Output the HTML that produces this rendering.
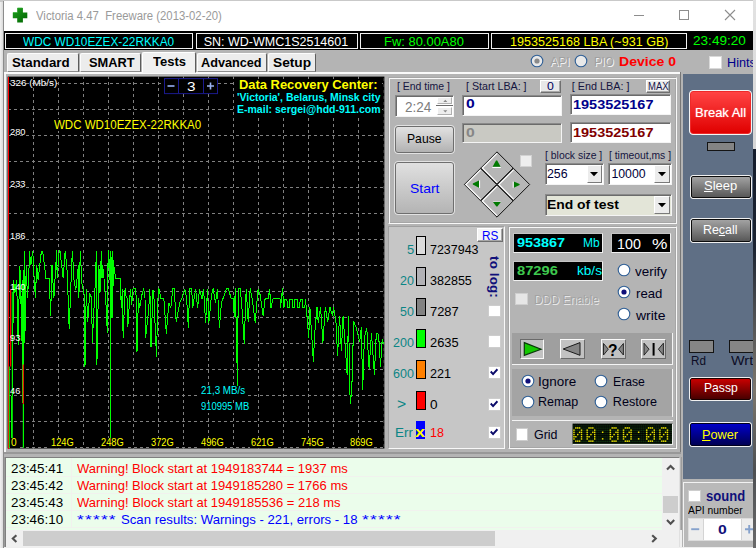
<!DOCTYPE html>
<html><head><meta charset="utf-8"><title>Victoria 4.47</title>
<style>
html,body{margin:0;padding:0}
body{width:756px;height:548px;overflow:hidden;position:relative;background:#e9e9e9;font-family:'Liberation Sans', sans-serif}
#r{position:absolute;left:0;top:0;width:756px;height:548px;overflow:hidden}
#r div,#r span,#r svg{position:absolute}
#r div{overflow:visible}
</style></head><body><div id="r">
<div style="left:0px;top:0px;width:756px;height:548px;background:linear-gradient(90deg,#f1f1f1 0,#dadada 3px,#dadada 100%)"></div>
<div style="left:0px;top:0px;width:756px;height:1.5px;background:#c9c9c9"></div>
<div style="left:753px;top:0px;width:3px;height:148.5px;background:linear-gradient(#e2e2e2,#d6d6d6)"></div>
<div style="left:753px;top:148.5px;width:3px;height:400px;background:linear-gradient(#141c2c,#1c2432 25%,#4a4c50 40%,#7d776e 60%,#4d4f52 80%,#6a6a6a 100%)"></div>
<div style="left:3px;top:1px;width:750px;height:547px;background:#b4b4b4;border-left:1px solid #8c8c8c"></div>
<div style="left:4px;top:1px;width:749px;height:30px;background:#fff"></div>
<svg style="left:12px;top:7px" width="17" height="17" viewBox="0 0 17 17"><defs><linearGradient id="gp" x1="0" y1="0" x2="1" y2="1"><stop offset="0" stop-color="#1fa01f"/><stop offset="1" stop-color="#006400"/></linearGradient></defs><path d="M5.2 1h5.7v4.4h4.4v5.8h-4.4v4.4h-5.7v-4.4h-4.4v-5.8h4.4z" fill="url(#gp)"/><path d="M5.5 1h5M1 5.5h4.5" stroke="#35b535" stroke-width="1" fill="none" opacity=".7"/></svg>
<span style="left:35.73px;top:10.34px;font:normal 12px 'Liberation Sans', sans-serif;line-height:1;color:#9a9a9a;white-space:pre;transform:scaleX(0.9455);transform-origin:0 0;white-space:pre;">Victoria 4.47  Freeware (2013-02-20)</span>
<svg style="left:620px;top:1px" width="133" height="30" viewBox="620 1 133 30"><path d="M634 15.5h10" stroke="#8d8d8d" stroke-width="1"/><rect x="679.5" y="10.5" width="9" height="9" fill="none" stroke="#8d8d8d" stroke-width="1"/><path d="M725 10l10 10M735 10l-10 10" stroke="#8d8d8d" stroke-width="1.1"/></svg>
<div style="left:4px;top:31px;width:749px;height:18.9px;background:#000"></div>
<div style="left:5px;top:32.6px;width:188.2px;height:16.2px;box-sizing:border-box;border:1px solid #f2f2f2"></div>
<div style="left:195.5px;top:32.6px;width:162.5px;height:16.2px;box-sizing:border-box;border:1px solid #f2f2f2"></div>
<div style="left:360px;top:32.6px;width:129px;height:16.2px;box-sizing:border-box;border:1px solid #f2f2f2"></div>
<div style="left:491.3px;top:32.6px;width:195.9px;height:16.2px;box-sizing:border-box;border:1px solid #f2f2f2"></div>
<span style="left:22.91px;top:35.72px;font:normal 12.5px 'Liberation Sans', sans-serif;line-height:1;color:#00ffff;white-space:pre;transform:scaleX(0.9463);transform-origin:0 0;">WDC WD10EZEX-22RKKA0</span>
<span style="left:203.68px;top:35.72px;font:normal 12.5px 'Liberation Sans', sans-serif;line-height:1;color:#fff;white-space:pre;">SN: WD-WMC1S2514601</span>
<span style="left:384.05px;top:35.72px;font:normal 12.5px 'Liberation Sans', sans-serif;line-height:1;color:#00ff00;white-space:pre;transform:scaleX(1.0357);transform-origin:0 0;">Fw: 80.00A80</span>
<span style="left:510.07px;top:35.72px;font:normal 12.5px 'Liberation Sans', sans-serif;line-height:1;color:#ffff00;white-space:pre;transform:scaleX(1.0072);transform-origin:0 0;">1953525168 LBA (~931 GB)</span>
<span style="left:693.32px;top:34.46px;font:normal 13.4px 'Liberation Sans', sans-serif;line-height:1;color:#00ff00;white-space:pre;transform:scaleX(1.0141);transform-origin:0 0;">23:49:20</span>
<div style="left:6.8px;top:53.2px;width:71.9px;height:18.9px;box-sizing:border-box;background:#ececec;border:1px solid;border-color:#fcfcfc #5c5c5c #8c8c8c #fcfcfc;border-radius:2px 2px 0 0"></div>
<span style="left:11.93px;top:57.35px;font:bold 12.7px 'Liberation Sans', sans-serif;line-height:1;color:#000;white-space:pre;transform:scaleX(1.0478);transform-origin:0 0;">Standard</span>
<div style="left:79.6px;top:53.2px;width:61.2px;height:18.9px;box-sizing:border-box;background:#ececec;border:1px solid;border-color:#fcfcfc #5c5c5c #8c8c8c #fcfcfc;border-radius:2px 2px 0 0"></div>
<span style="left:89.16px;top:57.35px;font:bold 12.7px 'Liberation Sans', sans-serif;line-height:1;color:#000;white-space:pre;transform:scaleX(1.0105);transform-origin:0 0;">SMART</span>
<div style="left:197px;top:53.2px;width:69.8px;height:18.9px;box-sizing:border-box;background:#ececec;border:1px solid;border-color:#fcfcfc #5c5c5c #8c8c8c #fcfcfc;border-radius:2px 2px 0 0"></div>
<span style="left:200.97px;top:57.35px;font:bold 12.7px 'Liberation Sans', sans-serif;line-height:1;color:#000;white-space:pre;">Advanced</span>
<div style="left:268px;top:53.2px;width:47.8px;height:18.9px;box-sizing:border-box;background:#ececec;border:1px solid;border-color:#fcfcfc #5c5c5c #8c8c8c #fcfcfc;border-radius:2px 2px 0 0"></div>
<span style="left:272.71px;top:57.35px;font:bold 12.7px 'Liberation Sans', sans-serif;line-height:1;color:#000;white-space:pre;transform:scaleX(1.0800);transform-origin:0 0;">Setup</span>
<div style="left:4px;top:72.1px;width:676.4px;height:2px;background:#fafafa"></div>
<div style="left:680.2px;top:72px;width:1px;height:380.5px;background:#777"></div>
<div style="left:142px;top:51.7px;width:54.3px;height:21.5px;box-sizing:border-box;background:#f0f0f0;border:1px solid;border-color:#fff #5c5c5c #f0f0f0 #fff;border-radius:2px 2px 0 0"></div>
<span style="left:153.25px;top:56.15px;font:bold 12.7px 'Liberation Sans', sans-serif;line-height:1;color:#000;white-space:pre;transform:scaleX(1.0248);transform-origin:0 0;">Tests</span>
<div style="left:4px;top:74px;width:1.6px;height:378px;background:#f4f4f4"></div>
<svg style="left:529.3px;top:52.8px" width="16" height="16" viewBox="0 0 16 16"><circle cx="8" cy="8" r="5.8" fill="#e9e9e9" stroke="#2f5f96" stroke-width="1.1"/><circle cx="8" cy="8" r="2.6" fill="#8a8a8a"/></svg>
<svg style="left:573px;top:52.8px" width="16" height="16" viewBox="0 0 16 16"><circle cx="8" cy="8" r="5.8" fill="#e9e9e9" stroke="#2f5f96" stroke-width="1.1"/></svg>
<span style="left:549.69px;top:55.20px;font:normal 13px 'Liberation Sans', sans-serif;line-height:1;color:#a0a0a0;white-space:pre;transform:scaleX(0.9406);transform-origin:0 0;text-shadow:1px 1px 0 #f4f4f4;">API</span>
<span style="left:593.73px;top:55.20px;font:normal 13px 'Liberation Sans', sans-serif;line-height:1;color:#a0a0a0;white-space:pre;transform:scaleX(0.8765);transform-origin:0 0;text-shadow:1px 1px 0 #f4f4f4;">PIO</span>
<span style="left:619.10px;top:54.74px;font:bold 13.3px 'Liberation Sans', sans-serif;line-height:1;color:#ff0000;white-space:pre;transform:scaleX(1.0563);transform-origin:0 0;">Device 0</span>
<div style="left:709px;top:56.3px;width:12.5px;height:12.5px;box-sizing:border-box;background:#fff;border:1px solid #d9d9d9"></div>
<span style="left:727.17px;top:56.20px;font:normal 13px 'Liberation Sans', sans-serif;line-height:1;color:#00008b;white-space:pre;transform:scaleX(0.9744);transform-origin:0 0;">Hints</span>
<svg style="left:0;top:0" width="756" height="548" viewBox="0 0 756 548"><rect x="7.6" y="76.6" width="376.8" height="371.9" fill="#000"/><path d="M33.5 76.0V448.5M58.5 76.0V448.5M83.5 76.0V448.5M108.5 76.0V448.5M133.5 76.0V448.5M158.5 76.0V448.5M183.5 76.0V448.5M208.5 76.0V448.5M233.5 76.0V448.5M258.5 76.0V448.5M283.5 76.0V448.5M308.5 76.0V448.5M333.5 76.0V448.5M358.5 76.0V448.5M8.0 83.5H384.4M8.0 109.5H384.4M8.0 135.5H384.4M8.0 161.5H384.4M8.0 187.5H384.4M8.0 213.5H384.4M8.0 239.5H384.4M8.0 265.5H384.4M8.0 291.5H384.4M8.0 317.5H384.4M8.0 343.5H384.4M8.0 369.5H384.4M8.0 395.5H384.4M8.0 421.5H384.4M8.0 447.5H384.4" stroke="#808080" stroke-width="1" stroke-dasharray="3 3" fill="none" shape-rendering="crispEdges"/><path d="M384.2 78V448" stroke="#777" stroke-width="1" stroke-dasharray="3 3" fill="none"/><path d="M8.5 76.6V448.5" stroke="#ff0000" stroke-width="1" shape-rendering="crispEdges"/><path d="M10.6 289.5V366.5" stroke="#ff0000" stroke-width="1.2"/><polyline points="11.3,447 13.6,279.7 14.9,292.9 16.6,279.7 18.2,344.7 19.6,266.5 20.6,274.4 21.5,341 22.2,279.7 23.3,447 23.8,279.7 24.4,251.2 24.8,343 26.2,266.5 27.5,298.2 28.8,274.4 29.5,251.2 30.8,265.1 32.8,250.6 33.4,266.5 35.4,298.2 36.7,265.1 38.1,279.7 41.4,251.2 42.7,251.2 46,278.4 49.3,278.4 50.6,316 52,265.1 53.9,298.2 55.9,264.5 56.6,249.9 57.2,278.4 59.2,250.6 59.9,250.6 63.2,278.4 65.2,250.6 67.2,271.7 69.2,328.8 71.8,261.2 72.5,250.6 73.8,278.4 75.8,290.3 78.4,265.1 78.8,298.2 80.4,250.6 81.7,282.3 84.4,295.6 85,366.5 86.3,288.9 87.7,322 89.7,292.9 91.6,298.2 92.3,342.7 95.6,275.7 96.3,251.2 96.9,364.5 98.9,265.1 99.6,286.3 100,292.9 101.3,251.2 102,278.4 102.6,265.1 104,278.4 106,304.8 107.3,332.8 107.9,265.1 108.6,249.9 109.3,279.7 110.3,251.2 110.6,447 111.2,265.1 112.6,251.2 112.8,318 113.2,259.8 114.6,271.7 115.9,278.4 120.5,278.4 121.2,307.5 122.5,288.9 123.1,337.7 125.1,288.3 125.8,295.6 127.1,298.2 127.8,326.8 130.4,288.9 131.7,304.8 133.1,288.3 135.1,288.3 136.4,298.2 137,351.6 138.4,298.2 139.7,307.5 142.3,292.9 143.7,288.3 145,298.2 145.6,337.7 148.9,307.5 149.6,288.9 150,294.8 151,347.4 153,289.9 154,298.8 156.5,357.3 157.9,298.8 158.9,288.5 160.9,298.8 163.9,298.8 166.3,333.5 168.8,302.8 170.8,307.7 172.8,288.9 174.2,288.9 176.2,321.6 179.8,302.8 181.7,298.8 184.7,288.9 186.7,298.8 188.3,327.6 189.7,288.9 191.7,288.9 192.7,307.7 195.6,288.9 197.6,307.7 199.6,288.9 202,298.8 203.6,288.9 205.6,322.6 207.5,288.9 208.9,322.6 211.5,294.8 213.1,288.5 215.5,302.8 217.5,288.9 219.4,327.6 221.4,302.8 224.4,294.8 226.4,288.5 228.4,288.9 231.3,298.8 233.3,298.8 234.3,316.7 235.3,288.5 236.9,354.4 237.3,386.1 238.3,288.9 240.3,288.9 242.3,312.7 244.2,343.5 246.2,288.9 248.2,321.6 250.2,288.5 252.2,298.8 255.2,322.6 258.1,288.9 260.1,294.8 263.1,315.7 265.1,298.8 268.1,298.8 269.6,288.9 271,307.7 273,298.8 280,298.8 280.6,307.7 282.5,288.5 283.9,307.7 285,299 286.9,299 287.4,307.3 289.3,307.3 289.7,299 292.1,299 292.6,307.3 294.5,307.3 295,299 297.3,299 297.8,307.3 299.7,307.3 300.2,299 302.5,299 303,307.3 304.9,307.3 305.4,299 306.3,307.3 308.7,338.1 309.9,307.3 313.4,361.8 314.6,334.5 317,307.3 318.2,322.7 320.6,307.3 322.9,342.8 325.3,307.3 327.7,321.5 330,307.3 332.4,315.6 333.6,307.3 336,322.7 337.6,355.8 339.5,315.6 341.4,351.1 343.1,315.6 345.4,348.7 347.1,374.8 348.5,315.6 350.2,404.4 351.8,389 353.7,321.5 356.1,327.4 359.7,341.6 361.3,327.4 362.7,390.2 364.4,336.9 366.8,328.6 369.1,368.9 371.5,333.3 374.4,374.8 376.3,333.3 378.6,334.5 380.5,366.5 382.2,339.3 383.4,344" fill="none" stroke="#00ff00" stroke-width="1" stroke-linejoin="miter" stroke-miterlimit="2" shape-rendering="crispEdges"/><path d="M9.3 366.5V448M12.3 291.8V448M23.3 404V448" stroke="#00ff00" stroke-width="1"/><path d="M23.3 364.5V404" stroke="#ff0000" stroke-width="1.2"/><rect x="164.5" y="78.6" width="53" height="15" fill="#000" stroke="#1a1a8c" stroke-width="1"/><path d="M178.5 78.6V93.6M203.5 78.6V93.6" stroke="#1a1a8c" stroke-width="1"/><path d="M167.5 86h7" stroke="#8ea6e6" stroke-width="1.7"/><path d="M207 86h7M210.5 82.5v7" stroke="#9ab2f0" stroke-width="1.6"/></svg>
<span style="left:186.73px;top:80.62px;font:normal 12.5px 'Liberation Sans', sans-serif;line-height:1;color:#fff;white-space:pre;transform:scaleX(1.2274);transform-origin:0 0;">3</span>
<span style="left:9.81px;top:77.57px;font:normal 9.6px 'Liberation Sans', sans-serif;line-height:1;color:#fff;white-space:pre;transform:scaleX(1.0312);transform-origin:0 0;">326 (Mb/s)</span>
<span style="left:9.83px;top:126.87px;font:normal 9.6px 'Liberation Sans', sans-serif;line-height:1;color:#fff;white-space:pre;transform:scaleX(0.9697);transform-origin:0 0;">280</span>
<span style="left:9.83px;top:178.77px;font:normal 9.6px 'Liberation Sans', sans-serif;line-height:1;color:#fff;white-space:pre;transform:scaleX(0.9697);transform-origin:0 0;">233</span>
<span style="left:9.83px;top:230.77px;font:normal 9.6px 'Liberation Sans', sans-serif;line-height:1;color:#fff;white-space:pre;transform:scaleX(0.9697);transform-origin:0 0;">186</span>
<span style="left:9.83px;top:282.07px;font:normal 9.6px 'Liberation Sans', sans-serif;line-height:1;color:#fff;white-space:pre;transform:scaleX(0.9697);transform-origin:0 0;">140</span>
<span style="left:9.84px;top:333.27px;font:normal 9.6px 'Liberation Sans', sans-serif;line-height:1;color:#fff;white-space:pre;transform:scaleX(0.9679);transform-origin:0 0;">93</span>
<span style="left:9.84px;top:386.07px;font:normal 9.6px 'Liberation Sans', sans-serif;line-height:1;color:#fff;white-space:pre;transform:scaleX(0.9679);transform-origin:0 0;">46</span>
<div style="left:10.3px;top:437.51px;width:7.6px;height:10.5px;background:#000"></div>
<span style="left:11.00px;top:436.81px;font:normal 10.5px 'Liberation Sans', sans-serif;line-height:1;color:#ffff00;white-space:pre;transform:scaleX(0.9596);transform-origin:0 0;">0</span>
<div style="left:50.2px;top:437.51px;width:24.8px;height:10.5px;background:#000"></div>
<span style="left:50.94px;top:436.81px;font:normal 10.5px 'Liberation Sans', sans-serif;line-height:1;color:#ffff00;white-space:pre;transform:scaleX(0.8848);transform-origin:0 0;">124G</span>
<div style="left:100.1px;top:437.51px;width:24.8px;height:10.5px;background:#000"></div>
<span style="left:100.84px;top:436.81px;font:normal 10.5px 'Liberation Sans', sans-serif;line-height:1;color:#ffff00;white-space:pre;transform:scaleX(0.8848);transform-origin:0 0;">248G</span>
<div style="left:150.1px;top:437.51px;width:24.8px;height:10.5px;background:#000"></div>
<span style="left:150.84px;top:436.81px;font:normal 10.5px 'Liberation Sans', sans-serif;line-height:1;color:#ffff00;white-space:pre;transform:scaleX(0.8848);transform-origin:0 0;">372G</span>
<div style="left:200.3px;top:437.51px;width:24.8px;height:10.5px;background:#000"></div>
<span style="left:201.04px;top:436.81px;font:normal 10.5px 'Liberation Sans', sans-serif;line-height:1;color:#ffff00;white-space:pre;transform:scaleX(0.8848);transform-origin:0 0;">496G</span>
<div style="left:250.3px;top:437.51px;width:24.8px;height:10.5px;background:#000"></div>
<span style="left:251.04px;top:436.81px;font:normal 10.5px 'Liberation Sans', sans-serif;line-height:1;color:#ffff00;white-space:pre;transform:scaleX(0.8848);transform-origin:0 0;">621G</span>
<div style="left:300.4px;top:437.51px;width:24.8px;height:10.5px;background:#000"></div>
<span style="left:301.14px;top:436.81px;font:normal 10.5px 'Liberation Sans', sans-serif;line-height:1;color:#ffff00;white-space:pre;transform:scaleX(0.8848);transform-origin:0 0;">745G</span>
<div style="left:349.4px;top:437.51px;width:24.8px;height:10.5px;background:#000"></div>
<span style="left:350.14px;top:436.81px;font:normal 10.5px 'Liberation Sans', sans-serif;line-height:1;color:#ffff00;white-space:pre;transform:scaleX(0.8848);transform-origin:0 0;">869G</span>
<div style="left:53.6px;top:119.44px;width:149px;height:12px;background:#000"></div>
<span style="left:54.22px;top:118.64px;font:normal 12px 'Liberation Sans', sans-serif;line-height:1;color:#ffff00;white-space:pre;transform:scaleX(0.9594);transform-origin:0 0;">WDC WD10EZEX-22RKKA0</span>
<div style="left:236px;top:78.5px;width:146px;height:37.5px;background:#000"></div>
<span style="left:238.75px;top:79.13px;font:bold 12.6px 'Liberation Sans', sans-serif;line-height:1;color:#ffff00;white-space:pre;transform:scaleX(1.0252);transform-origin:0 0;">Data Recovery Center:</span>
<span style="left:237.48px;top:92.73px;font:bold 10px 'Liberation Sans', sans-serif;line-height:1;color:#00ffff;white-space:pre;transform:scaleX(1.0447);transform-origin:0 0;">'Victoria', Belarus, Minsk city</span>
<span style="left:237.47px;top:105.03px;font:bold 10px 'Liberation Sans', sans-serif;line-height:1;color:#00ffff;white-space:pre;transform:scaleX(1.0519);transform-origin:0 0;">E-mail: sergei@hdd-911.com</span>
<div style="left:200.3px;top:386.8px;width:46.2px;height:10px;background:#000"></div>
<span style="left:201.01px;top:386.14px;font:normal 10px 'Liberation Sans', sans-serif;line-height:1;color:#00ffff;white-space:pre;transform:scaleX(0.9811);transform-origin:0 0;">21,3 MB/s</span>
<div style="left:200.3px;top:402.6px;width:50.3px;height:10px;background:#000"></div>
<span style="left:201.03px;top:401.94px;font:normal 10px 'Liberation Sans', sans-serif;line-height:1;color:#00ffff;white-space:pre;transform:scaleX(0.9431);transform-origin:0 0;">910995 MB</span>
<div style="left:4px;top:451.8px;width:677px;height:1.8px;background:#989898"></div>
<div style="left:388px;top:77px;width:289px;height:147px;box-sizing:border-box;background:#b4b4b4;border:1px solid;border-color:#a6a6a6 #f8f8f8 #f8f8f8 #a6a6a6;box-shadow:inset 1px 1px 0 #f8f8f8,inset -1px -1px 0 #a6a6a6"></div>
<div style="left:388.2px;top:226.2px;width:116.8px;height:223px;box-sizing:border-box;background:#c6c6c6;border:1px solid;border-color:#a0a0a0 #f8f8f8 #f8f8f8 #a0a0a0"></div>
<div style="left:508px;top:226px;width:169px;height:223px;box-sizing:border-box;background:#b4b4b4;border:1px solid;border-color:#a6a6a6 #f8f8f8 #f8f8f8 #a6a6a6;box-shadow:inset 1px 1px 0 #f8f8f8,inset -1px -1px 0 #a6a6a6"></div>
<span style="left:396.88px;top:80.86px;font:normal 10.8px 'Liberation Sans', sans-serif;line-height:1;color:#15153f;white-space:pre;transform:scaleX(0.9677);transform-origin:0 0;">[ End time ]</span>
<span style="left:465.57px;top:80.86px;font:normal 10.8px 'Liberation Sans', sans-serif;line-height:1;color:#15153f;white-space:pre;transform:scaleX(0.9894);transform-origin:0 0;">[ Start LBA: ]</span>
<span style="left:571.86px;top:80.86px;font:normal 10.8px 'Liberation Sans', sans-serif;line-height:1;color:#15153f;white-space:pre;">[ End LBA: ]</span>
<span style="left:544.78px;top:150.16px;font:normal 10.8px 'Liberation Sans', sans-serif;line-height:1;color:#15153f;white-space:pre;transform:scaleX(0.9635);transform-origin:0 0;">[ block size ]</span>
<span style="left:609.48px;top:150.16px;font:normal 10.8px 'Liberation Sans', sans-serif;line-height:1;color:#15153f;white-space:pre;transform:scaleX(0.9571);transform-origin:0 0;">[ timeout,ms ]</span>
<div style="left:395px;top:95px;width:59.4px;height:22.4px;box-sizing:border-box;background:#fff;border:1px solid;border-color:#8a8a8a #f4f4f4 #f4f4f4 #8a8a8a;box-shadow:inset 1px 1px 0 #6b6b6b;"></div>
<span style="left:404.92px;top:100.35px;font:normal 14px 'Liberation Sans', sans-serif;line-height:1;color:#7d7d7d;white-space:pre;transform:scaleX(0.9671);transform-origin:0 0;">2:24</span>
<div style="left:436.8px;top:97px;width:15.6px;height:7.4px;box-sizing:border-box;background:#eeeeee;border:1px solid;border-color:#fff #b0b0b0 #b0b0b0 #fff"></div>
<div style="left:436.4px;top:104.5px;width:17px;height:1.3px;background:#6a6a6a"></div>
<div style="left:436.8px;top:107px;width:15.6px;height:8.4px;box-sizing:border-box;background:#eeeeee;border:1px solid;border-color:#fff #b0b0b0 #b0b0b0 #fff"></div>
<svg style="left:436.5px;top:96px" width="16" height="21" viewBox="0 0 16 21"><path d="M6.3 5.9l2-2.2 2 2.2z M6.3 14.2l2 2.2 2-2.2z" fill="#8a8a8a"/></svg>
<div style="left:540px;top:80px;width:20.8px;height:12.8px;box-sizing:border-box;background:#e8e8e8;border:1px solid;border-color:#fff #6f6f6f #6f6f6f #fff;box-shadow:inset -1px -1px 0 #a8a8a8"></div>
<span style="left:546.69px;top:81.29px;font:normal 11px 'Liberation Sans', sans-serif;line-height:1;color:#000060;white-space:pre;transform:scaleX(1.1144);transform-origin:0 0;">0</span>
<div style="left:646px;top:80.2px;width:24.3px;height:12.4px;box-sizing:border-box;background:#ececec;border:1px solid;border-color:#fff #6f6f6f #6f6f6f #fff;box-shadow:inset -1px -1px 0 #a8a8a8"></div>
<span style="left:648.33px;top:81.43px;font:normal 10.6px 'Liberation Sans', sans-serif;line-height:1;color:#15154a;white-space:pre;transform:scaleX(0.8946);transform-origin:0 0;">MAX</span>
<div style="left:462px;top:94.8px;width:99.5px;height:20.8px;box-sizing:border-box;background:#fff;border:1px solid;border-color:#8a8a8a #f4f4f4 #f4f4f4 #8a8a8a;box-shadow:inset 1px 1px 0 #6b6b6b;"></div>
<span style="left:465.51px;top:98.33px;font:bold 12.6px 'Liberation Sans', sans-serif;line-height:1;color:#00008b;white-space:pre;transform:scaleX(1.2510);transform-origin:0 0;">0</span>
<div style="left:570.2px;top:94.4px;width:101.2px;height:20.8px;box-sizing:border-box;background:#fff;border:1px solid;border-color:#8a8a8a #f4f4f4 #f4f4f4 #8a8a8a;box-shadow:inset 1px 1px 0 #6b6b6b;"></div>
<span style="left:573.28px;top:98.50px;font:bold 12.4px 'Liberation Sans', sans-serif;line-height:1;color:#00008b;white-space:pre;transform:scaleX(1.1672);transform-origin:0 0;">1953525167</span>
<div style="left:462px;top:122.5px;width:99.5px;height:20.9px;box-sizing:border-box;background:#c9c9c3;border:1px solid;border-color:#8a8a8a #f4f4f4 #f4f4f4 #8a8a8a;box-shadow:inset 1px 1px 0 #6b6b6b;"></div>
<span style="left:465.51px;top:126.53px;font:bold 12.6px 'Liberation Sans', sans-serif;line-height:1;color:#868686;white-space:pre;transform:scaleX(1.2510);transform-origin:0 0;">0</span>
<div style="left:570.2px;top:122.4px;width:101.2px;height:20.4px;box-sizing:border-box;background:#fff;border:1px solid;border-color:#8a8a8a #f4f4f4 #f4f4f4 #8a8a8a;box-shadow:inset 1px 1px 0 #6b6b6b;"></div>
<span style="left:573.28px;top:126.70px;font:bold 12.4px 'Liberation Sans', sans-serif;line-height:1;color:#800000;white-space:pre;transform:scaleX(1.1672);transform-origin:0 0;">1953525167</span>
<div style="left:394px;top:125px;width:61.3px;height:29.2px;box-sizing:border-box;border:1px solid #e2e2e2;border-radius:4px;background:#e2e2e2"></div>
<div style="left:395px;top:126px;width:59.3px;height:27.2px;box-sizing:border-box;border:1px solid #6e6e6e;border-radius:3px;background:linear-gradient(#e2e2e2,#b2b2b2)"></div>
<span style="left:406.79px;top:133.46px;font:normal 12.8px 'Liberation Sans', sans-serif;line-height:1;color:#000;white-space:pre;transform:scaleX(0.9510);transform-origin:0 0;">Pause</span>
<div style="left:394px;top:161.2px;width:61.3px;height:54px;box-sizing:border-box;border:1px solid #e2e2e2;border-radius:4px;background:#e2e2e2"></div>
<div style="left:395px;top:162.2px;width:59.3px;height:52px;box-sizing:border-box;border:1px solid #6e6e6e;border-radius:3px;background:linear-gradient(#e0e0e0,#b4b4b4)"></div>
<span style="left:409.70px;top:182.96px;font:normal 12.8px 'Liberation Sans', sans-serif;line-height:1;color:#0000ff;white-space:pre;transform:scaleX(1.0873);transform-origin:0 0;">Start</span>
<svg style="left:0;top:0" width="756" height="548" viewBox="0 0 756 548"><path d="M480.85 168L497 151.85L513.15 168L497 184.15Z" fill="#b6b6b6" stroke="#101010" stroke-width="1"/><path d="M497 153.35L482.35 168L497 182.65" fill="none" stroke="#fdfdfd" stroke-width="1.25"/><path d="M464.35 184.5L480.5 168.35L496.65 184.5L480.5 200.65Z" fill="#b6b6b6" stroke="#101010" stroke-width="1"/><path d="M480.5 169.85L465.85 184.5L480.5 199.15" fill="none" stroke="#fdfdfd" stroke-width="1.25"/><path d="M497.35 184.5L513.5 168.35L529.65 184.5L513.5 200.65Z" fill="#b6b6b6" stroke="#101010" stroke-width="1"/><path d="M513.5 169.85L498.85 184.5L513.5 199.15" fill="none" stroke="#fdfdfd" stroke-width="1.25"/><path d="M480.85 201L497 184.85L513.15 201L497 217.15Z" fill="#b6b6b6" stroke="#101010" stroke-width="1"/><path d="M497 186.35L482.35 201L497 215.65" fill="none" stroke="#fdfdfd" stroke-width="1.25"/><path d="M496 160.6h1.2l3.4 6.2h-8z" fill="#007a00"/><path d="M492.3 167.5h8.6" stroke="#fff" stroke-width="1"/><path d="M472.8 183.6v1l6.2 3.2v-7.4z" fill="#007a00"/><path d="M479.6 180.4v7.6" stroke="#fff" stroke-width="1"/><path d="M519.6 184v1l-5.8 2.8v-6.4z" fill="#007a00"/><path d="M513.2 181.6v6.2" stroke="#fff" stroke-width="1"/><path d="M496.4 206.6h1l3.4-4.6h-7.8z" fill="#007a00"/><path d="M493 201.4h7.6" stroke="#fff" stroke-width=".8" opacity=".55"/></svg>
<div style="left:520.4px;top:154.8px;width:12px;height:11.8px;box-sizing:border-box;background:#eeeeee;border:1px solid #d2d2d2"></div>
<div style="left:544.5px;top:162.8px;width:59.1px;height:22px;box-sizing:border-box;background:#fff;border:1px solid;border-color:#8a8a8a #f4f4f4 #f4f4f4 #8a8a8a;box-shadow:inset 1px 1px 0 #6b6b6b;"></div>
<div style="left:586.6px;top:164.8px;width:15px;height:18px;box-sizing:border-box;background:#ececec;border:1px solid;border-color:#fff #7a7a7a #7a7a7a #fff"></div>
<svg style="left:589.1px;top:171.3px" width="10" height="6" viewBox="0 0 10 6"><path d="M1 1h8l-4 4.2z" fill="#000"/></svg>
<span style="left:546.78px;top:168.19px;font:normal 12.3px 'Liberation Sans', sans-serif;line-height:1;color:#000038;white-space:pre;transform:scaleX(1.0051);transform-origin:0 0;">256</span>
<div style="left:608.3px;top:162.8px;width:63.9px;height:22px;box-sizing:border-box;background:#fff;border:1px solid;border-color:#8a8a8a #f4f4f4 #f4f4f4 #8a8a8a;box-shadow:inset 1px 1px 0 #6b6b6b;"></div>
<div style="left:654.2px;top:164.8px;width:16px;height:18px;box-sizing:border-box;background:#ececec;border:1px solid;border-color:#fff #7a7a7a #7a7a7a #fff"></div>
<svg style="left:657.2px;top:171.3px" width="10" height="6" viewBox="0 0 10 6"><path d="M1 1h8l-4 4.2z" fill="#000"/></svg>
<span style="left:611.38px;top:168.19px;font:normal 12.3px 'Liberation Sans', sans-serif;line-height:1;color:#000038;white-space:pre;">10000</span>
<div style="left:544.5px;top:193.5px;width:127.7px;height:22.1px;box-sizing:border-box;background:#e3e5d8;border:1px solid;border-color:#8a8a8a #f4f4f4 #f4f4f4 #8a8a8a;box-shadow:inset 1px 1px 0 #6b6b6b;"></div>
<div style="left:654.2px;top:195.5px;width:16px;height:18.1px;box-sizing:border-box;background:#ececec;border:1px solid;border-color:#fff #7a7a7a #7a7a7a #fff"></div>
<svg style="left:657.2px;top:202.05px" width="10" height="6" viewBox="0 0 10 6"><path d="M1 1h8l-4 4.2z" fill="#000"/></svg>
<span style="left:547.20px;top:199.38px;font:bold 12.9px 'Liberation Sans', sans-serif;line-height:1;color:#000;white-space:pre;transform:scaleX(1.0778);transform-origin:0 0;">End of test</span>
<div style="left:477.2px;top:228.4px;width:25.9px;height:13.9px;box-sizing:border-box;background:#f4f4f4;border:1px solid;border-color:#fff #6f6f6f #6f6f6f #fff;box-shadow:inset -1px -1px 0 #a8a8a8"></div>
<span style="left:481.91px;top:229.43px;font:normal 13.2px 'Liberation Sans', sans-serif;line-height:1;color:#0000ff;white-space:pre;transform:scaleX(0.8937);transform-origin:0 0;">RS</span>
<div style="left:416px;top:236px;width:10.3px;height:18.7px;box-sizing:border-box;background:#dcdcdc;border:1px solid #000"></div>
<span style="left:406.65px;top:243.83px;font:normal 12.6px 'Liberation Sans', sans-serif;line-height:1;color:#0b8585;white-space:pre;transform:scaleX(1.0251);transform-origin:0 0;">5</span>
<span style="left:430.08px;top:243.83px;font:normal 12.6px 'Liberation Sans', sans-serif;line-height:1;color:#000;white-space:pre;transform:scaleX(0.9901);transform-origin:0 0;">7237943</span>
<div style="left:416px;top:267px;width:10.3px;height:18.7px;box-sizing:border-box;background:#b2b2b6;border:1px solid #000"></div>
<span style="left:399.98px;top:274.83px;font:normal 12.6px 'Liberation Sans', sans-serif;line-height:1;color:#0b8585;white-space:pre;transform:scaleX(0.9878);transform-origin:0 0;">20</span>
<span style="left:430.07px;top:274.83px;font:normal 12.6px 'Liberation Sans', sans-serif;line-height:1;color:#000;white-space:pre;transform:scaleX(0.9958);transform-origin:0 0;">382855</span>
<div style="left:416px;top:297.8px;width:10.3px;height:18.7px;box-sizing:border-box;background:#828282;border:1px solid #000"></div>
<span style="left:399.98px;top:305.63px;font:normal 12.6px 'Liberation Sans', sans-serif;line-height:1;color:#0b8585;white-space:pre;transform:scaleX(0.9878);transform-origin:0 0;">50</span>
<span style="left:430.06px;top:305.63px;font:normal 12.6px 'Liberation Sans', sans-serif;line-height:1;color:#000;white-space:pre;transform:scaleX(1.0235);transform-origin:0 0;">7287</span>
<div style="left:416px;top:329.2px;width:10.3px;height:18.7px;box-sizing:border-box;background:#00ff00;border:1px solid #000"></div>
<span style="left:392.97px;top:337.03px;font:normal 12.6px 'Liberation Sans', sans-serif;line-height:1;color:#0b8585;white-space:pre;transform:scaleX(0.9921);transform-origin:0 0;">200</span>
<span style="left:430.06px;top:337.03px;font:normal 12.6px 'Liberation Sans', sans-serif;line-height:1;color:#000;white-space:pre;transform:scaleX(1.0235);transform-origin:0 0;">2635</span>
<div style="left:416px;top:360.2px;width:10.3px;height:18.7px;box-sizing:border-box;background:#ff8000;border:1px solid #000"></div>
<span style="left:392.97px;top:368.03px;font:normal 12.6px 'Liberation Sans', sans-serif;line-height:1;color:#0b8585;white-space:pre;transform:scaleX(0.9921);transform-origin:0 0;">600</span>
<span style="left:430.07px;top:368.03px;font:normal 12.6px 'Liberation Sans', sans-serif;line-height:1;color:#000;white-space:pre;">221</span>
<div style="left:416px;top:391.2px;width:10.3px;height:18.7px;box-sizing:border-box;background:#ff0000;border:1px solid #000"></div>
<span style="left:397.02px;top:397.35px;font:normal 14px 'Liberation Sans', sans-serif;line-height:1;color:#0b8585;white-space:pre;transform:scaleX(1.1197);transform-origin:0 0;">&gt;</span>
<span style="left:430.02px;top:399.03px;font:normal 12.6px 'Liberation Sans', sans-serif;line-height:1;color:#000;white-space:pre;transform:scaleX(1.0772);transform-origin:0 0;">0</span>
<div style="left:415.7px;top:421px;width:9.6px;height:18px;background:#0000ff"></div>
<span style="left:415.39px;top:424.53px;font:bold 14.5px 'Liberation Sans', sans-serif;line-height:1;color:#ffff00;white-space:pre;transform:scaleX(1.2522);transform-origin:0 0;">x</span>
<span style="left:394.73px;top:426.64px;font:normal 12px 'Liberation Sans', sans-serif;line-height:1;color:#0b8585;white-space:pre;transform:scaleX(1.1216);transform-origin:0 0;">Err</span>
<span style="left:430.07px;top:427.44px;font:normal 12px 'Liberation Sans', sans-serif;line-height:1;color:#ff0000;white-space:pre;transform:scaleX(1.0445);transform-origin:0 0;">18</span>
<div style="left:494.4px;top:276.8px;width:0;height:0"><div style="position:absolute;left:-22px;top:-8px;width:44px;height:16px;line-height:16px;text-align:center;transform:rotate(90deg);font:bold 13.5px 'Liberation Sans', sans-serif;letter-spacing:0.1px;color:#10107a;white-space:nowrap">to log:</div></div>
<div style="left:488.2px;top:305.1px;width:12.4px;height:12.4px;box-sizing:border-box;background:#fff;border:1px solid #cdcdcd"></div>
<div style="left:488.2px;top:335.2px;width:12.4px;height:12.4px;box-sizing:border-box;background:#fff;border:1px solid #cdcdcd"></div>
<div style="left:488.2px;top:366.3px;width:12.4px;height:12.4px;box-sizing:border-box;background:#fff;border:1px solid #cdcdcd"><svg style="left:0;top:0" width="10.4" height="10.4" viewBox="0 0 12 12"><path d="M2 5.2l2.7 3l5-5.6" fill="none" stroke="#0a0a6a" stroke-width="2.2"/></svg></div>
<div style="left:488.2px;top:398.3px;width:12.4px;height:12.4px;box-sizing:border-box;background:#fff;border:1px solid #cdcdcd"><svg style="left:0;top:0" width="10.4" height="10.4" viewBox="0 0 12 12"><path d="M2 5.2l2.7 3l5-5.6" fill="none" stroke="#0a0a6a" stroke-width="2.2"/></svg></div>
<div style="left:488.2px;top:426.4px;width:12.4px;height:12.4px;box-sizing:border-box;background:#fff;border:1px solid #cdcdcd"><svg style="left:0;top:0" width="10.4" height="10.4" viewBox="0 0 12 12"><path d="M2 5.2l2.7 3l5-5.6" fill="none" stroke="#0a0a6a" stroke-width="2.2"/></svg></div>
<div style="left:512.8px;top:232.8px;width:90.2px;height:20px;box-sizing:border-box;background:#000;border:1px solid;border-color:#c4c4c4 #f0f0f0 #f0f0f0 #c4c4c4"></div>
<span style="left:517.48px;top:237.37px;font:bold 12.2px 'Liberation Sans', sans-serif;line-height:1;color:#00ffff;white-space:pre;transform:scaleX(1.1837);transform-origin:0 0;">953867</span>
<span style="left:582.80px;top:237.12px;font:normal 12.5px 'Liberation Sans', sans-serif;line-height:1;color:#00ffff;white-space:pre;transform:scaleX(0.9612);transform-origin:0 0;">Mb</span>
<div style="left:512.8px;top:260.8px;width:90.2px;height:19.8px;box-sizing:border-box;background:#000;border:1px solid;border-color:#c4c4c4 #f0f0f0 #f0f0f0 #c4c4c4"></div>
<span style="left:517.46px;top:265.17px;font:bold 12.2px 'Liberation Sans', sans-serif;line-height:1;color:#3ec84e;white-space:pre;transform:scaleX(1.2060);transform-origin:0 0;">87296</span>
<span style="left:577.02px;top:264.92px;font:normal 12.5px 'Liberation Sans', sans-serif;line-height:1;color:#00ffff;white-space:pre;transform:scaleX(1.0882);transform-origin:0 0;">kb/s</span>
<div style="left:611px;top:232.7px;width:60.4px;height:20.3px;box-sizing:border-box;background:#000;border:1px solid;border-color:#c4c4c4 #f0f0f0 #f0f0f0 #c4c4c4"></div>
<span style="left:617.19px;top:237.04px;font:normal 14.6px 'Liberation Sans', sans-serif;line-height:1;color:#fff;white-space:pre;transform:scaleX(0.9782);transform-origin:0 0;">100</span>
<span style="left:651.73px;top:237.04px;font:normal 14.6px 'Liberation Sans', sans-serif;line-height:1;color:#fff;white-space:pre;transform:scaleX(1.1888);transform-origin:0 0;">%</span>
<svg style="left:616.4px;top:262.4px" width="16" height="16" viewBox="0 0 16 16"><circle cx="8" cy="8" r="5.8" fill="#fff" stroke="#2f5f96" stroke-width="1.1"/></svg>
<svg style="left:616.4px;top:284.4px" width="16" height="16" viewBox="0 0 16 16"><circle cx="8" cy="8" r="5.8" fill="#fff" stroke="#2f5f96" stroke-width="1.1"/><circle cx="8" cy="8" r="2.6" fill="#10107a"/></svg>
<svg style="left:616.4px;top:306.4px" width="16" height="16" viewBox="0 0 16 16"><circle cx="8" cy="8" r="5.8" fill="#fff" stroke="#2f5f96" stroke-width="1.1"/></svg>
<span style="left:635.33px;top:265.53px;font:normal 12.6px 'Liberation Sans', sans-serif;line-height:1;color:#000020;white-space:pre;transform:scaleX(1.0647);transform-origin:0 0;">verify</span>
<span style="left:635.84px;top:287.53px;font:normal 12.6px 'Liberation Sans', sans-serif;line-height:1;color:#000020;white-space:pre;transform:scaleX(1.0435);transform-origin:0 0;">read</span>
<span style="left:635.80px;top:309.53px;font:normal 12.6px 'Liberation Sans', sans-serif;line-height:1;color:#000020;white-space:pre;transform:scaleX(1.1092);transform-origin:0 0;">write</span>
<div style="left:515.3px;top:292.6px;width:12.5px;height:12.2px;box-sizing:border-box;background:#e6e6e6;border:1px solid #cfcfcf"></div>
<span style="left:533.82px;top:293.00px;font:normal 13px 'Liberation Sans', sans-serif;line-height:1;color:#a3a3a3;white-space:pre;transform:scaleX(0.8962);transform-origin:0 0;text-shadow:1px 1px 0 #e8e8e8;">DDD Enable</span>
<div style="left:512.4px;top:333.2px;width:160px;height:30.4px;background:#9f9f9f"></div>
<div style="left:512.4px;top:363.6px;width:160.8px;height:1.7px;background:#f4f4f4"></div>
<div style="left:672.2px;top:333.2px;width:1.2px;height:32px;background:#f4f4f4"></div>
<div style="left:512.4px;top:369.2px;width:160px;height:47px;background:#a4a4a4"></div>
<div style="left:672.2px;top:369.2px;width:1.2px;height:47.4px;background:#f4f4f4"></div>
<div style="left:512.4px;top:419.6px;width:161px;height:1.2px;background:#f4f4f4"></div>
<div style="left:519.8px;top:339px;width:24.4px;height:20.2px;box-sizing:border-box;background:#c2c2c2;border:1px solid;border-color:#6a6a6a #fafafa #fafafa #6a6a6a"></div>
<div style="left:559.7px;top:339px;width:25.3px;height:20.2px;box-sizing:border-box;background:#c2c2c2;border:1px solid;border-color:#fafafa #6a6a6a #6a6a6a #fafafa"></div>
<div style="left:601.2px;top:339px;width:24.6px;height:20.2px;box-sizing:border-box;background:#c2c2c2;border:1px solid;border-color:#fafafa #6a6a6a #6a6a6a #fafafa"></div>
<div style="left:641.2px;top:339px;width:24.8px;height:20.2px;box-sizing:border-box;background:#c2c2c2;border:1px solid;border-color:#fafafa #6a6a6a #6a6a6a #fafafa"></div>
<svg style="left:0;top:0" width="756" height="548" viewBox="0 0 756 548"><path d="M524.3 342.6L541 349.2L524.3 355.3Z" fill="#14c800" stroke="#0a3a0a" stroke-width="1.2"/><path d="M580 342.6L563.2 349L580 355.3Z" fill="#848484" stroke="#1a1a1a" stroke-width="1"/><path d="M603.5 343.5L608.3 349.2L603.5 355Z" fill="#848484" stroke="#1a1a1a" stroke-width=".9"/><path d="M623.4 343.5L618.6 349.2L623.4 355Z" fill="#848484" stroke="#1a1a1a" stroke-width=".9"/><path d="M644 343.2L649 349.2L644 355.2Z" fill="#848484" stroke="#1a1a1a" stroke-width=".9"/><path d="M663.4 343.2L658.4 349.2L663.4 355.2Z" fill="#848484" stroke="#1a1a1a" stroke-width=".9"/><path d="M653.6 343V355.6" stroke="#000" stroke-width="2"/></svg>
<span style="left:608.02px;top:342.03px;font:bold 16.5px 'Liberation Sans', sans-serif;line-height:1;color:#000;white-space:pre;transform:scaleX(0.9474);transform-origin:0 0;">?</span>
<svg style="left:519.7px;top:373.4px" width="16" height="16" viewBox="0 0 16 16"><circle cx="8" cy="8" r="5.8" fill="#fff" stroke="#2f5f96" stroke-width="1.1"/><circle cx="8" cy="8" r="2.6" fill="#10107a"/></svg>
<svg style="left:519.7px;top:393.5px" width="16" height="16" viewBox="0 0 16 16"><circle cx="8" cy="8" r="5.8" fill="#fff" stroke="#2f5f96" stroke-width="1.1"/></svg>
<svg style="left:593.2px;top:373.4px" width="16" height="16" viewBox="0 0 16 16"><circle cx="8" cy="8" r="5.8" fill="#fff" stroke="#2f5f96" stroke-width="1.1"/></svg>
<svg style="left:593.2px;top:393.5px" width="16" height="16" viewBox="0 0 16 16"><circle cx="8" cy="8" r="5.8" fill="#fff" stroke="#2f5f96" stroke-width="1.1"/></svg>
<span style="left:538.33px;top:376.03px;font:normal 12.6px 'Liberation Sans', sans-serif;line-height:1;color:#000018;white-space:pre;transform:scaleX(1.0679);transform-origin:0 0;">Ignore</span>
<span style="left:538.38px;top:396.13px;font:normal 12.6px 'Liberation Sans', sans-serif;line-height:1;color:#000018;white-space:pre;transform:scaleX(0.9911);transform-origin:0 0;">Remap</span>
<span style="left:612.89px;top:376.03px;font:normal 12.6px 'Liberation Sans', sans-serif;line-height:1;color:#000018;white-space:pre;transform:scaleX(0.9701);transform-origin:0 0;">Erase</span>
<span style="left:612.87px;top:396.13px;font:normal 12.6px 'Liberation Sans', sans-serif;line-height:1;color:#000018;white-space:pre;">Restore</span>
<div style="left:516px;top:428.3px;width:12.3px;height:12.3px;box-sizing:border-box;background:#fff;border:1px solid #cdcdcd"></div>
<span style="left:533.88px;top:428.83px;font:normal 12.6px 'Liberation Sans', sans-serif;line-height:1;color:#000018;white-space:pre;transform:scaleX(0.9851);transform-origin:0 0;">Grid</span>
<svg style="left:0;top:0" width="756" height="548" viewBox="0 0 756 548"><defs><pattern id="dots" x="573.25" y="427.2" width="1.885" height="2.2" patternUnits="userSpaceOnUse"><rect x=".2" y=".3" width="1.1" height="1.2" fill="#124012"/></pattern></defs><rect x="572.6" y="423.7" width="99.8" height="20.1" fill="#000"/><rect x="572.6" y="423.7" width="99.8" height="20.1" fill="url(#dots)"/><g fill="#ece000"><rect x="575.13" y="427.20" width="1.45" height="1.5"/><rect x="577.02" y="427.20" width="1.45" height="1.5"/><rect x="578.90" y="427.20" width="1.45" height="1.5"/><rect x="573.25" y="429.40" width="1.45" height="1.5"/><rect x="580.79" y="429.40" width="1.45" height="1.5"/><rect x="573.25" y="431.60" width="1.45" height="1.5"/><rect x="578.90" y="431.60" width="1.45" height="1.5"/><rect x="580.79" y="431.60" width="1.45" height="1.5"/><rect x="573.25" y="433.80" width="1.45" height="1.5"/><rect x="577.02" y="433.80" width="1.45" height="1.5"/><rect x="580.79" y="433.80" width="1.45" height="1.5"/><rect x="573.25" y="436.00" width="1.45" height="1.5"/><rect x="575.13" y="436.00" width="1.45" height="1.5"/><rect x="580.79" y="436.00" width="1.45" height="1.5"/><rect x="573.25" y="438.20" width="1.45" height="1.5"/><rect x="580.79" y="438.20" width="1.45" height="1.5"/><rect x="575.13" y="440.40" width="1.45" height="1.5"/><rect x="577.02" y="440.40" width="1.45" height="1.5"/><rect x="578.90" y="440.40" width="1.45" height="1.5"/><rect x="588.34" y="427.20" width="1.45" height="1.5"/><rect x="590.22" y="427.20" width="1.45" height="1.5"/><rect x="592.11" y="427.20" width="1.45" height="1.5"/><rect x="586.45" y="429.40" width="1.45" height="1.5"/><rect x="593.99" y="429.40" width="1.45" height="1.5"/><rect x="586.45" y="431.60" width="1.45" height="1.5"/><rect x="592.11" y="431.60" width="1.45" height="1.5"/><rect x="593.99" y="431.60" width="1.45" height="1.5"/><rect x="586.45" y="433.80" width="1.45" height="1.5"/><rect x="590.22" y="433.80" width="1.45" height="1.5"/><rect x="593.99" y="433.80" width="1.45" height="1.5"/><rect x="586.45" y="436.00" width="1.45" height="1.5"/><rect x="588.34" y="436.00" width="1.45" height="1.5"/><rect x="593.99" y="436.00" width="1.45" height="1.5"/><rect x="586.45" y="438.20" width="1.45" height="1.5"/><rect x="593.99" y="438.20" width="1.45" height="1.5"/><rect x="588.34" y="440.40" width="1.45" height="1.5"/><rect x="590.22" y="440.40" width="1.45" height="1.5"/><rect x="592.11" y="440.40" width="1.45" height="1.5"/><rect x="611.49" y="427.20" width="1.45" height="1.5"/><rect x="613.37" y="427.20" width="1.45" height="1.5"/><rect x="615.25" y="427.20" width="1.45" height="1.5"/><rect x="609.60" y="429.40" width="1.45" height="1.5"/><rect x="617.14" y="429.40" width="1.45" height="1.5"/><rect x="609.60" y="431.60" width="1.45" height="1.5"/><rect x="615.25" y="431.60" width="1.45" height="1.5"/><rect x="617.14" y="431.60" width="1.45" height="1.5"/><rect x="609.60" y="433.80" width="1.45" height="1.5"/><rect x="613.37" y="433.80" width="1.45" height="1.5"/><rect x="617.14" y="433.80" width="1.45" height="1.5"/><rect x="609.60" y="436.00" width="1.45" height="1.5"/><rect x="611.49" y="436.00" width="1.45" height="1.5"/><rect x="617.14" y="436.00" width="1.45" height="1.5"/><rect x="609.60" y="438.20" width="1.45" height="1.5"/><rect x="617.14" y="438.20" width="1.45" height="1.5"/><rect x="611.49" y="440.40" width="1.45" height="1.5"/><rect x="613.37" y="440.40" width="1.45" height="1.5"/><rect x="615.25" y="440.40" width="1.45" height="1.5"/><rect x="624.68" y="427.20" width="1.45" height="1.5"/><rect x="626.57" y="427.20" width="1.45" height="1.5"/><rect x="628.45" y="427.20" width="1.45" height="1.5"/><rect x="622.80" y="429.40" width="1.45" height="1.5"/><rect x="630.34" y="429.40" width="1.45" height="1.5"/><rect x="622.80" y="431.60" width="1.45" height="1.5"/><rect x="628.45" y="431.60" width="1.45" height="1.5"/><rect x="630.34" y="431.60" width="1.45" height="1.5"/><rect x="622.80" y="433.80" width="1.45" height="1.5"/><rect x="626.57" y="433.80" width="1.45" height="1.5"/><rect x="630.34" y="433.80" width="1.45" height="1.5"/><rect x="622.80" y="436.00" width="1.45" height="1.5"/><rect x="624.68" y="436.00" width="1.45" height="1.5"/><rect x="630.34" y="436.00" width="1.45" height="1.5"/><rect x="622.80" y="438.20" width="1.45" height="1.5"/><rect x="630.34" y="438.20" width="1.45" height="1.5"/><rect x="624.68" y="440.40" width="1.45" height="1.5"/><rect x="626.57" y="440.40" width="1.45" height="1.5"/><rect x="628.45" y="440.40" width="1.45" height="1.5"/><rect x="647.88" y="427.20" width="1.45" height="1.5"/><rect x="649.77" y="427.20" width="1.45" height="1.5"/><rect x="651.65" y="427.20" width="1.45" height="1.5"/><rect x="646.00" y="429.40" width="1.45" height="1.5"/><rect x="653.54" y="429.40" width="1.45" height="1.5"/><rect x="646.00" y="431.60" width="1.45" height="1.5"/><rect x="651.65" y="431.60" width="1.45" height="1.5"/><rect x="653.54" y="431.60" width="1.45" height="1.5"/><rect x="646.00" y="433.80" width="1.45" height="1.5"/><rect x="649.77" y="433.80" width="1.45" height="1.5"/><rect x="653.54" y="433.80" width="1.45" height="1.5"/><rect x="646.00" y="436.00" width="1.45" height="1.5"/><rect x="647.88" y="436.00" width="1.45" height="1.5"/><rect x="653.54" y="436.00" width="1.45" height="1.5"/><rect x="646.00" y="438.20" width="1.45" height="1.5"/><rect x="653.54" y="438.20" width="1.45" height="1.5"/><rect x="647.88" y="440.40" width="1.45" height="1.5"/><rect x="649.77" y="440.40" width="1.45" height="1.5"/><rect x="651.65" y="440.40" width="1.45" height="1.5"/><rect x="661.09" y="427.20" width="1.45" height="1.5"/><rect x="662.97" y="427.20" width="1.45" height="1.5"/><rect x="664.86" y="427.20" width="1.45" height="1.5"/><rect x="659.20" y="429.40" width="1.45" height="1.5"/><rect x="666.74" y="429.40" width="1.45" height="1.5"/><rect x="659.20" y="431.60" width="1.45" height="1.5"/><rect x="664.86" y="431.60" width="1.45" height="1.5"/><rect x="666.74" y="431.60" width="1.45" height="1.5"/><rect x="659.20" y="433.80" width="1.45" height="1.5"/><rect x="662.97" y="433.80" width="1.45" height="1.5"/><rect x="666.74" y="433.80" width="1.45" height="1.5"/><rect x="659.20" y="436.00" width="1.45" height="1.5"/><rect x="661.09" y="436.00" width="1.45" height="1.5"/><rect x="666.74" y="436.00" width="1.45" height="1.5"/><rect x="659.20" y="438.20" width="1.45" height="1.5"/><rect x="666.74" y="438.20" width="1.45" height="1.5"/><rect x="661.09" y="440.40" width="1.45" height="1.5"/><rect x="662.97" y="440.40" width="1.45" height="1.5"/><rect x="664.86" y="440.40" width="1.45" height="1.5"/><rect x="601.9" y="431.5" width="1.5" height="1.5"/><rect x="601.9" y="438.1" width="1.5" height="1.5"/><rect x="637.9" y="431.5" width="1.5" height="1.5"/><rect x="637.9" y="438.1" width="1.5" height="1.5"/></g></svg>
<div style="left:572.6px;top:443.8px;width:100.4px;height:1px;background:#ededed"></div>
<div style="left:672.4px;top:423.7px;width:1px;height:21px;background:#ededed"></div>
<div style="left:683px;top:74.1px;width:70px;height:405px;background:#5f6f85"></div>
<div style="left:689px;top:90px;width:63.4px;height:45.1px;box-sizing:border-box;border:1px solid #f4f4f4;border-radius:4px;background:#f4f4f4"></div>
<div style="left:690px;top:91px;width:61.4px;height:43.1px;box-sizing:border-box;border:1px solid #ee2a2a;border-radius:3px;background:linear-gradient(#ff4444,#e00000)"></div>
<span style="left:694.85px;top:105.87px;font:normal 13.5px 'Liberation Sans', sans-serif;line-height:1;color:#fff;white-space:pre;transform:scaleX(0.9590);transform-origin:0 0;text-shadow:0 0 1px #fbb;">Break All</span>
<div style="left:707px;top:142px;width:28px;height:8.8px;box-sizing:border-box;background:#848484;border:1px solid #141414"></div>
<div style="left:689.5px;top:174.5px;width:62.5px;height:24.2px;box-sizing:border-box;border:1px solid #f0f0f0;border-radius:3px;background:#f0f0f0"></div>
<div style="left:690.5px;top:175.5px;width:60.5px;height:22.2px;box-sizing:border-box;border:1px solid #0c0c0c;border-radius:2px;background:linear-gradient(#a2a2a2,#585858)"></div>
<span style="left:703.55px;top:180.13px;font:normal 12.6px 'Liberation Sans', sans-serif;line-height:1;color:#fff;white-space:pre;transform:scaleX(1.0304);transform-origin:0 0;"><u>S</u>leep</span>
<div style="left:689.5px;top:218.3px;width:62.5px;height:24.4px;box-sizing:border-box;border:1px solid #f0f0f0;border-radius:3px;background:#f0f0f0"></div>
<div style="left:690.5px;top:219.3px;width:60.5px;height:22.4px;box-sizing:border-box;border:1px solid #0c0c0c;border-radius:2px;background:linear-gradient(#a2a2a2,#585858)"></div>
<span style="left:702.88px;top:223.53px;font:normal 12.6px 'Liberation Sans', sans-serif;line-height:1;color:#fff;white-space:pre;transform:scaleX(0.9835);transform-origin:0 0;">Re<u>c</u>all</span>
<div style="left:689px;top:340px;width:25px;height:12.9px;box-sizing:border-box;background:#868686;border:1px solid #141414"></div>
<div style="left:729px;top:340px;width:24.5px;height:12.9px;box-sizing:border-box;background:#868686;border:1px solid #141414;border-right:none"></div>
<span style="left:691.01px;top:355.12px;font:normal 12.5px 'Liberation Sans', sans-serif;line-height:1;color:#0c0c24;white-space:pre;transform:scaleX(0.9366);transform-origin:0 0;">Rd</span>
<span style="left:730.68px;top:355.12px;font:normal 12.5px 'Liberation Sans', sans-serif;line-height:1;color:#0c0c24;white-space:pre;transform:scaleX(1.1520);transform-origin:0 0;">Wrt</span>
<div style="left:689.3px;top:376.7px;width:62.7px;height:23.9px;box-sizing:border-box;border:1px solid #f0f0f0;border-radius:3px;background:#f0f0f0"></div>
<div style="left:690.3px;top:377.7px;width:60.7px;height:21.9px;box-sizing:border-box;border:1px solid #1a0000;border-radius:2px;background:linear-gradient(#c80000,#480000)"></div>
<span style="left:703.59px;top:382.13px;font:normal 12.6px 'Liberation Sans', sans-serif;line-height:1;color:#fff;white-space:pre;transform:scaleX(0.9628);transform-origin:0 0;">Passp</span>
<div style="left:689.3px;top:422.2px;width:62.7px;height:24.4px;box-sizing:border-box;border:1px solid #f0f0f0;border-radius:3px;background:#f0f0f0"></div>
<div style="left:690.3px;top:423.2px;width:60.7px;height:22.4px;box-sizing:border-box;border:1px solid #000020;border-radius:2px;background:linear-gradient(#0000c8,#000054)"></div>
<span style="left:701.66px;top:428.53px;font:normal 12.6px 'Liberation Sans', sans-serif;line-height:1;color:#ffff00;white-space:pre;transform:scaleX(1.0104);transform-origin:0 0;"><u>P</u>ower</span>
<div style="left:683px;top:482.3px;width:70px;height:66px;box-sizing:border-box;background:#b9b9b9;border-top:1px solid #f2f2f2;border-left:1px solid #f2f2f2"></div>
<div style="left:688.4px;top:489.6px;width:12.2px;height:12.2px;box-sizing:border-box;background:#fff;border:1px solid #cdcdcd"></div>
<span style="left:705.95px;top:489.23px;font:bold 14.5px 'Liberation Sans', sans-serif;line-height:1;color:#10107a;white-space:pre;transform:scaleX(0.8989);transform-origin:0 0;">sound</span>
<span style="left:688.28px;top:503.58px;font:normal 11.6px 'Liberation Sans', sans-serif;line-height:1;color:#000;white-space:pre;transform:scaleX(0.8925);transform-origin:0 0;">API number</span>
<div style="left:687.9px;top:517.8px;width:66px;height:22.8px;box-sizing:border-box;background:#fff;border:1px solid #dcdcdc"></div>
<div style="left:688.9px;top:518.8px;width:14px;height:20.8px;background:#ededed;border-right:1px solid #d4d4d4"></div>
<div style="left:741.4px;top:518.8px;width:12.1px;height:20.8px;background:#ededed;border-left:1px solid #d4d4d4"></div>
<svg style="left:0;top:0" width="756" height="548" viewBox="0 0 756 548"><path d="M691.2 529.2h8" stroke="#86a2cc" stroke-width="1.9"/><path d="M745 529.2h8.4M749.2 525v8.4" stroke="#86a2cc" stroke-width="1.9"/></svg>
<span style="left:717.71px;top:522.69px;font:bold 13.6px 'Liberation Sans', sans-serif;line-height:1;color:#10107a;white-space:pre;transform:scaleX(1.1608);transform-origin:0 0;">0</span>
<div style="left:753px;top:0px;width:3px;height:148.5px;background:linear-gradient(#e2e2e2,#d6d6d6)"></div>
<div style="left:753px;top:148.5px;width:3px;height:400px;background:linear-gradient(#141c2c,#1c2432 25%,#4a4c50 40%,#7d776e 60%,#4d4f52 80%,#6a6a6a 100%)"></div>
<div style="left:4px;top:457px;width:1px;height:91px;background:#9a9a9a"></div>
<div style="left:5px;top:457px;width:675.4px;height:91px;box-sizing:border-box;background:#ebfdeb;border:1px solid #7f7f7f;border-right-color:#e0e0e0"></div>
<div style="left:6px;top:476px;width:656.3px;height:1px;background:#f1f2ee"></div>
<div style="left:6px;top:493px;width:656.3px;height:1px;background:#f1f2ee"></div>
<div style="left:6px;top:510px;width:656.3px;height:1px;background:#f1f2ee"></div>
<div style="left:6px;top:527px;width:656.3px;height:1px;background:#f1f2ee"></div>
<div style="left:71.2px;top:458px;width:1px;height:70px;background:#f1f2ee"></div>
<span style="left:11.43px;top:463.06px;font:normal 12.8px 'Liberation Sans', sans-serif;line-height:1;color:#000;white-space:pre;transform:scaleX(1.0464);transform-origin:0 0;">23:45:41</span>
<span style="left:77.05px;top:463.06px;font:normal 12.8px 'Liberation Sans', sans-serif;line-height:1;color:#ff0000;white-space:pre;transform:scaleX(1.0152);transform-origin:0 0;">Warning! Block start at 1949183744 = 1937 ms</span>
<span style="left:11.43px;top:479.76px;font:normal 12.8px 'Liberation Sans', sans-serif;line-height:1;color:#000;white-space:pre;transform:scaleX(1.0464);transform-origin:0 0;">23:45:42</span>
<span style="left:77.05px;top:479.76px;font:normal 12.8px 'Liberation Sans', sans-serif;line-height:1;color:#ff0000;white-space:pre;transform:scaleX(1.0152);transform-origin:0 0;">Warning! Block start at 1949185280 = 1766 ms</span>
<span style="left:11.43px;top:496.66px;font:normal 12.8px 'Liberation Sans', sans-serif;line-height:1;color:#000;white-space:pre;transform:scaleX(1.0464);transform-origin:0 0;">23:45:43</span>
<span style="left:77.05px;top:496.66px;font:normal 12.8px 'Liberation Sans', sans-serif;line-height:1;color:#ff0000;white-space:pre;transform:scaleX(1.0157);transform-origin:0 0;">Warning! Block start at 1949185536 = 218 ms</span>
<span style="left:11.43px;top:513.56px;font:normal 12.8px 'Liberation Sans', sans-serif;line-height:1;color:#000;white-space:pre;transform:scaleX(1.0464);transform-origin:0 0;">23:46:10</span>
<span style="left:77.04px;top:513.56px;font:normal 12.8px 'Liberation Sans', sans-serif;line-height:1;color:#0000ff;white-space:pre;transform:scaleX(1.3500);transform-origin:0 0;letter-spacing:0.919px;">*****</span>
<span style="left:121.24px;top:513.56px;font:normal 12.8px 'Liberation Sans', sans-serif;line-height:1;color:#0000ff;white-space:pre;transform:scaleX(1.0285);transform-origin:0 0;">Scan results: Warnings - 221, errors - 18</span>
<span style="left:362.44px;top:513.56px;font:normal 12.8px 'Liberation Sans', sans-serif;line-height:1;color:#0000ff;white-space:pre;transform:scaleX(1.3500);transform-origin:0 0;letter-spacing:0.919px;">*****</span>
<div style="left:662.3px;top:458px;width:17.2px;height:72.5px;background:#f0f0f0"></div>
<div style="left:663.4px;top:496px;width:14.8px;height:16.6px;background:#cdcdcd"></div>
<div style="left:6px;top:530.4px;width:673.4px;height:16.6px;background:#f0f0f0"></div>
<div style="left:680.6px;top:457px;width:0.9px;height:73px;background:#9c9c9c"></div>
<div style="left:680px;top:530px;width:2.4px;height:18px;background:#efefef"></div>
<div style="left:23.2px;top:531.2px;width:471.5px;height:14.5px;background:#cdcdcd"></div>
<svg style="left:0;top:0" width="756" height="548" viewBox="0 0 756 548"><g fill="none" stroke="#505050" stroke-width="1.5"><path d="M667 469.6l3.6-3.7l3.6 3.7" stroke-width="2.1"/><path d="M667 520l3.6 3.7l3.6-3.7" stroke-width="2.1"/><path d="M16.4 535.2l-3.6 3.4l3.6 3.4" stroke-width="2.1"/><path d="M652.2 535.2l3.6 3.4l-3.6 3.4" stroke-width="2.1"/></g></svg>
<div style="left:4px;top:547px;width:749px;height:1px;background:#efefef"></div>
</div></body></html>
